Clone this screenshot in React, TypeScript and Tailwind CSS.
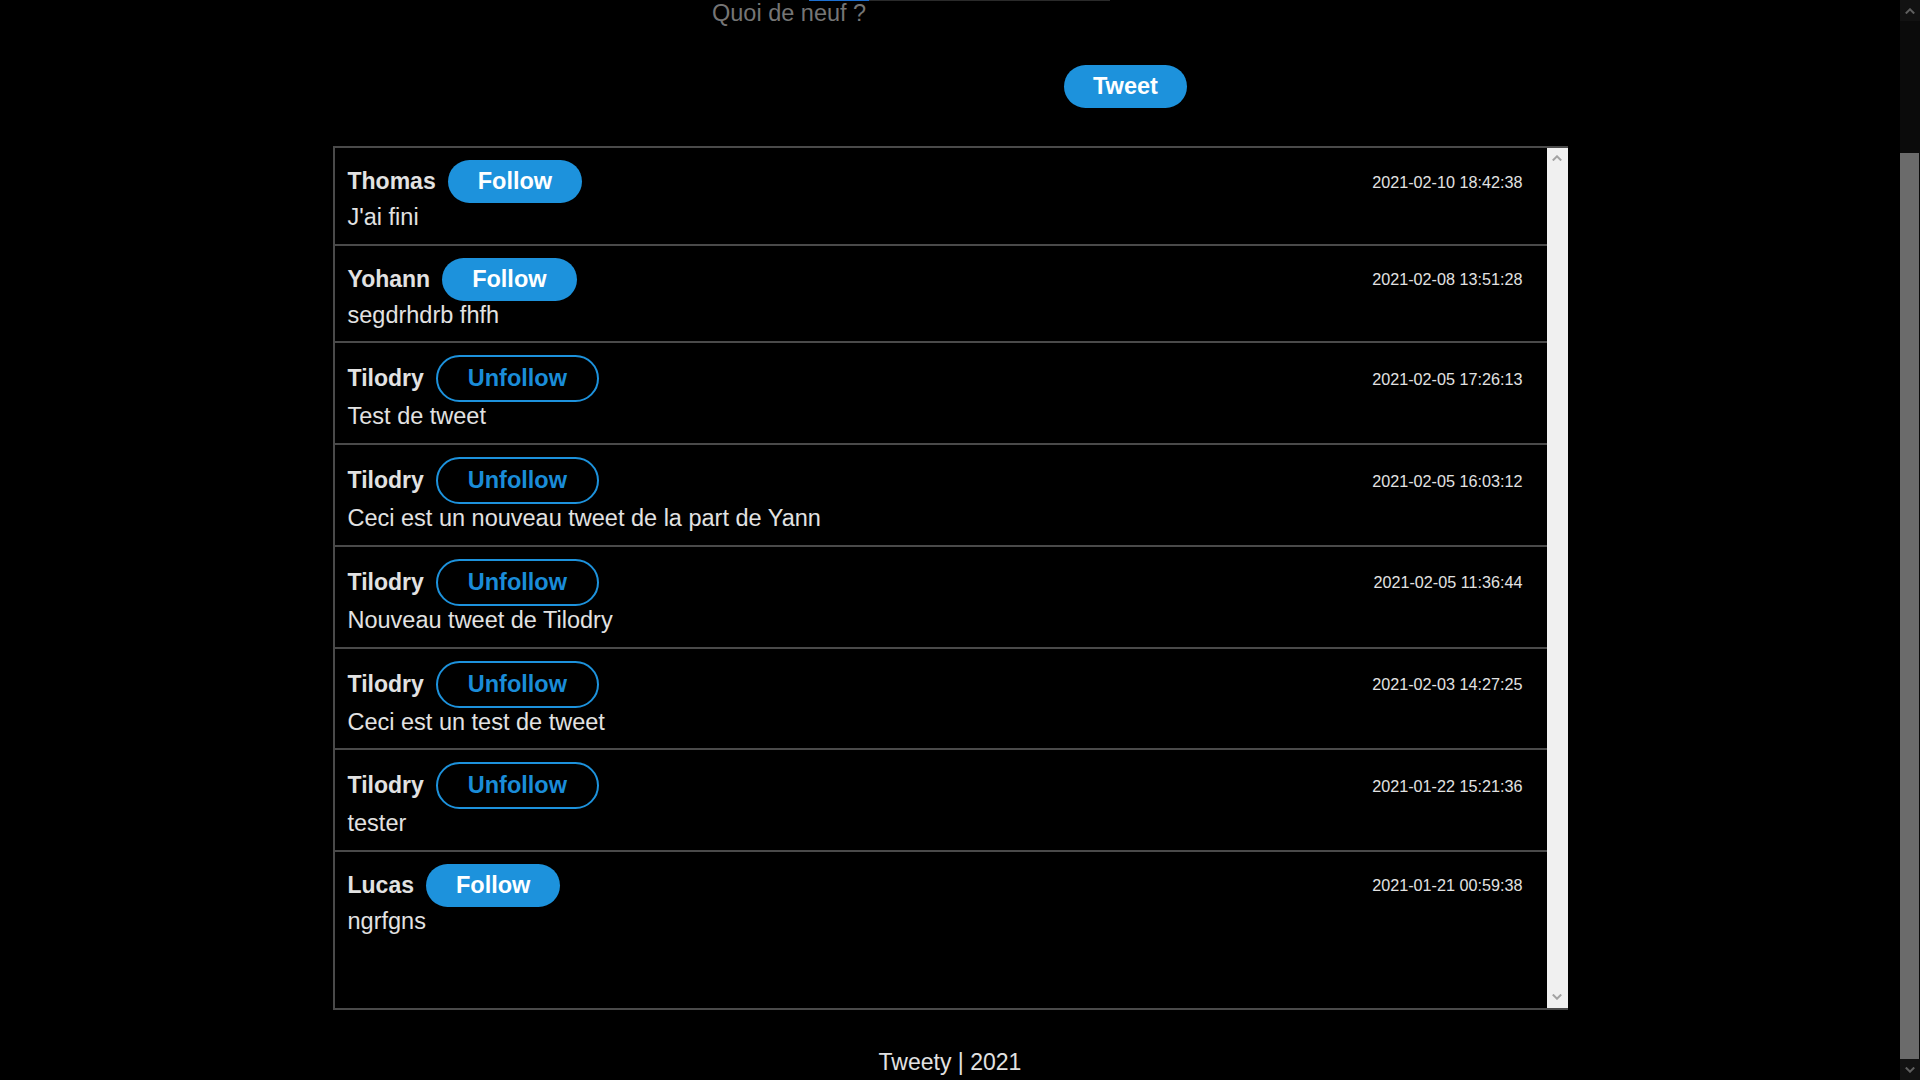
import React from "react";

type Tweet = { name: string; follow: boolean; date: string; text: string };

const tweets: Tweet[] = [
  { name: "Thomas", follow: true, date: "2021-02-10 18:42:38", text: "J'ai fini" },
  { name: "Yohann", follow: true, date: "2021-02-08 13:51:28", text: "segdrhdrb fhfh" },
  { name: "Tilodry", follow: false, date: "2021-02-05 17:26:13", text: "Test de tweet" },
  { name: "Tilodry", follow: false, date: "2021-02-05 16:03:12", text: "Ceci est un nouveau tweet de la part de Yann" },
  { name: "Tilodry", follow: false, date: "2021-02-05 11:36:44", text: "Nouveau tweet de Tilodry" },
  { name: "Tilodry", follow: false, date: "2021-02-03 14:27:25", text: "Ceci est un test de tweet" },
  { name: "Tilodry", follow: false, date: "2021-01-22 15:21:36", text: "tester" },
  { name: "Lucas", follow: true, date: "2021-01-21 00:59:38", text: "ngrfgns" },
];

function Chevron({ up, color }: { up: boolean; color: string }) {
  return (
    <svg width="10" height="6" viewBox="0 0 10 6">
      <path
        d={up ? "M0.8 5.5 L5 1.3 L9.2 5.5" : "M0.8 0.5 L5 4.7 L9.2 0.5"}
        fill="none"
        stroke={color}
        strokeWidth="2"
      />
    </svg>
  );
}

function Row({ t, last }: { t: Tweet; last: boolean }) {
  return (
    <div
      className={
        last
          ? "pl-[13px] pr-[24px] pt-[12px] pb-[12px]"
          : "border-b-2 border-[#4a4a4a] pl-[13px] pr-[24px] pt-[12px] pb-[12px]"
      }
    >
      <div className="flex items-center justify-between">
        <div className="flex items-center gap-3">
          <span className="text-[23px] leading-[27px] font-bold text-[#e2e2e2]">{t.name}</span>
          {t.follow ? (
            <button className="h-[43px] px-[30px] rounded-full bg-[#1d92dc] text-white text-[23.5px] leading-[27px] font-bold flex items-center">
              Follow
            </button>
          ) : (
            <button className="h-[47px] px-[30px] rounded-full border-2 border-[#1d92dc] text-[#1a8cd8] text-[23.5px] leading-[27px] font-bold flex items-center">
              Unfollow
            </button>
          )}
        </div>
        <span className="text-[16.2px] leading-[20px] text-[#e2e2e2]">{t.date}</span>
      </div>
      <div className="text-[23.5px] leading-[28.7px] text-[#e2e2e2]">{t.text}</div>
    </div>
  );
}

export default function App() {
  return (
    <div
      className="w-[1920px] h-[1080px] overflow-hidden bg-black flex"
      style={{ fontFamily: '"Liberation Sans", Arial, sans-serif' }}
    >
      <div className="w-[1900px] h-[1080px] flex flex-col items-center">
        {/* top form */}
        <div className="w-[1900px] h-[146px] flex flex-col">
          <div className="ml-[809px] w-[301px] h-px bg-[#2a2a2a] flex">
            <div className="w-[60px] h-px bg-[#1d6fd0]" />
          </div>
          <div className="ml-[712px] -mt-px text-[23.5px] leading-[27px] text-[#757575]">Quoi de neuf ?</div>
          <div className="ml-[1064px] mt-[38px]">
            <button className="h-[43px] px-[29px] rounded-full bg-[#1d92dc] text-white text-[23.5px] leading-[27px] font-bold flex items-center justify-center">
              Tweet
            </button>
          </div>
        </div>

        {/* tweets box */}
        <div className="w-[1235px] h-[864px] border-l-2 border-t-2 border-b-2 border-[#4a4a4a] flex">
          <div className="flex-1 flex flex-col">
            {tweets.map((t, i) => (
              <Row key={i} t={t} last={i === tweets.length - 1} />
            ))}
          </div>
          <div className="w-[21px] h-full bg-[#f0f0f0] flex flex-col items-center justify-between pt-[7px] pb-[8px]">
            <Chevron up color="#a3a3a3" />
            <Chevron up={false} color="#a3a3a3" />
          </div>
        </div>

        {/* footer */}
        <div className="pt-[39px] text-[23px] leading-[27px] text-[#e2e2e2]">Tweety | 2021</div>
      </div>

      {/* page scrollbar */}
      <div className="w-[20px] h-[1080px] bg-[#0b0b0b] flex flex-col">
        <div className="h-[21px] bg-[#121212] flex items-center justify-center">
          <Chevron up color="#5f5f5f" />
        </div>
        <div className="flex-1 flex flex-col pt-[132px] pr-[1px]">
          <div className="h-[906px] bg-[#6b6b6b]" />
        </div>
        <div className="h-[21px] bg-[#121212] flex items-center justify-center">
          <Chevron up={false} color="#5f5f5f" />
        </div>
      </div>
    </div>
  );
}
